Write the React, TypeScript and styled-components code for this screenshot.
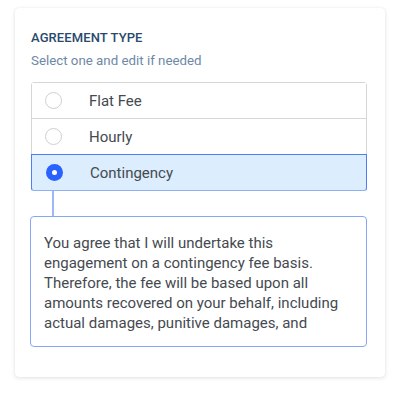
import styled, { createGlobalStyle } from "styled-components";

const GlobalStyle = createGlobalStyle`
  body {
    margin: 0;
    background: #ffffff;
    font-family: Roboto, "Liberation Sans", sans-serif;
  }
`

const Page = styled.div`
  width: 400px;
  height: 400px;
  padding: 8px 15px 0 15px;
  box-sizing: border-box;
`

const Card = styled.div`
  background: #ffffff;
  border-radius: 4px;
  box-shadow: 0 1px 4px rgba(0, 0, 0, 0.12), 0 0 1px rgba(0, 0, 0, 0.1);
  padding: 22px 18px 0 16px;
  height: 369px;
  box-sizing: border-box;
`

const Title = styled.h2`
  margin: 0;
  font-size: 13px;
  font-weight: 500;
  letter-spacing: 0.1px;
  color: #294a6d;
  line-height: 16px;
`

const Subtitle = styled.p`
  margin: 7px 0 0;
  font-size: 13.3px;
  color: #6d88a6;
  line-height: 16px;
`

const OptionList = styled.div`
  margin-top: 13px;
  border: 1px solid #d6d6d6;
  border-radius: 3px;
  display: flex;
  flex-direction: column;
`

const Option = styled.div<{ $selected?: boolean }>`
  height: 35px;
  display: flex;
  align-items: center;
  padding-left: 13px;
  gap: 27px;
  font-size: 15px;
  color: #444a50;
  border-top: 1px solid ${p => (p.$selected ? "#4f7df2" : "#d6d6d6")};
  background: ${p => (p.$selected ? "#dcedfd" : "#ffffff")};
  ${p => p.$selected && `
    margin: 0 -1px -1px;
    padding-left: 14px;
    border: 1px solid #4f7df2;
    border-bottom-color: #8fb0f7;
    border-radius: 0 0 3px 3px;
  `}
  &:first-child {
    border-top: none;
  }
`

const Radio = styled.span<{ $checked?: boolean }>`
  width: 17px;
  height: 17px;
  border-radius: 50%;
  box-sizing: border-box;
  flex-shrink: 0;
  display: flex;
  align-items: center;
  justify-content: center;
  border: ${p => (p.$checked ? "none" : "1px solid #cfcfcf")};
  background: ${p => (p.$checked ? "#2962ff" : "#ffffff")};
  &::after {
    content: "";
    display: ${p => (p.$checked ? "block" : "none")};
    width: 5px;
    height: 5px;
    border-radius: 50%;
    background: #ffffff;
  }
`

const Connector = styled.div`
  width: 2px;
  height: 25px;
  margin-left: 21px;
  background: #9db7f7;
`

const DetailBox = styled.div`
  border: 1px solid #86a7f6;
  border-radius: 4px;
  padding: 16px 26px 14px 13px;
  height: 131px;
  box-sizing: border-box;
  font-size: 15px;
  line-height: 20px;
  color: #454a50;
  margin-left: -1px;
`

export default function App() {
  return (
    <>
      <GlobalStyle />
      <Page>
        <Card>
          <Title>AGREEMENT TYPE</Title>
          <Subtitle>Select one and edit if needed</Subtitle>
          <OptionList>
            <Option><Radio />Flat Fee</Option>
            <Option><Radio />Hourly</Option>
            <Option $selected><Radio $checked />Contingency</Option>
          </OptionList>
          <Connector />
          <DetailBox>
            You agree that I will undertake this engagement on a contingency fee basis.
            Therefore, the fee will be based upon all amounts recovered on your behalf,
            including actual damages, punitive damages, and
          </DetailBox>
        </Card>
      </Page>
    </>
  )
}
